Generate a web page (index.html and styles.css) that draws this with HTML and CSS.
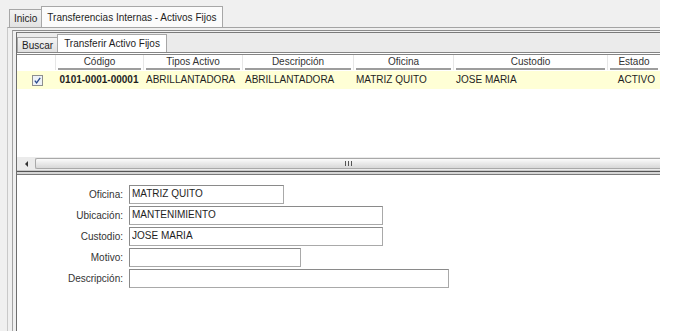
FILE: index.html
```html
<!DOCTYPE html>
<html lang="es">
<head>
    <meta charset="UTF-8">
    <meta name="viewport" content="width=device-width, initial-scale=1.0">
    <title>Transferencias Internas - Activos Fijos</title>
    <link rel="stylesheet" href="styles.css">
</head>
<body>
    <div class="window">
        <div class="tabs">
            <div class="tab">Inicio</div>
            <div class="tab active">Transferencias Internas - Activos Fijos</div>
        </div>

        <div class="outer-panel">
            <div class="inner-panel">
                <div class="inner-body">
                    <div class="subtabs">
                        <div class="subtab">Buscar</div>
                        <div class="subtab active">Transferir Activo Fijos</div>
                    </div>

                    <div class="grid-panel">
                        <div class="grid grid-head">
                            <div class="th blank"></div>
                            <div class="th">Código</div>
                            <div class="th">Tipos Activo</div>
                            <div class="th">Descripción</div>
                            <div class="th">Oficina</div>
                            <div class="th">Custodio</div>
                            <div class="th">Estado</div>
                        </div>
                        <div class="grid grid-row">
                            <div class="td check">
                                <svg width="11" height="11" viewBox="0 0 11 11">
                                    <rect x="0.5" y="0.5" width="10" height="10" fill="#eef2f8" stroke="#8e8f8f"/>
                                    <path d="M2.8 5.6 L4.6 7.9 L8.2 2.8" fill="none" stroke="#2b4c8c" stroke-width="1.3"/>
                                </svg>
                            </div>
                            <div class="td code">0101-0001-00001</div>
                            <div class="td">ABRILLANTADORA</div>
                            <div class="td">ABRILLANTADORA</div>
                            <div class="td">MATRIZ QUITO</div>
                            <div class="td">JOSE MARIA</div>
                            <div class="td right">ACTIVO</div>
                        </div>
                    </div>

                    <div class="hscroll">
                        <div class="arrow"><span class="arrow-left"></span></div>
                        <div class="thumb"><span class="grip"></span></div>
                    </div>
                    <div class="split"></div>

                    <div class="form">
                        <div class="form-row">
                            <label>Oficina:</label>
                            <input type="text" class="w-sm" value="MATRIZ QUITO" readonly>
                        </div>
                        <div class="form-row">
                            <label>Ubicación:</label>
                            <input type="text" class="w-lg" value="MANTENIMIENTO" readonly>
                        </div>
                        <div class="form-row">
                            <label>Custodio:</label>
                            <input type="text" class="w-lg" value="JOSE MARIA" readonly>
                        </div>
                        <div class="form-row">
                            <label>Motivo:</label>
                            <input type="text" class="w-md">
                        </div>
                        <div class="form-row">
                            <label>Descripción:</label>
                            <input type="text" class="w-xl">
                        </div>
                    </div>
                </div>
            </div>
        </div>
    </div>
</body>
</html>
```

FILE: styles.css
```css
body {
    margin: 0;
    background: #fff;
    font-family: "Liberation Sans", Arial, sans-serif;
    font-size: 10px;
    color: #1e1e1e;
}
.window {
    width: 660px;
    height: 331px;
    background: #f0f0f0;
    overflow: hidden;
}

/* top tabs */
.tabs {
    display: flex;
    align-items: flex-end;
    height: 27px;
    padding-left: 9px;
}
.tab {
    height: 17px;
    line-height: 18px;
    padding: 0 4px;
    border: 1px solid #a7a7a7;
    border-bottom: none;
    border-right: none;
    background: linear-gradient(#f3f3f3, #e2e2e2);
}
.tab.active {
    height: 20px;
    line-height: 22px;
    padding: 0 5px;
    border-right: 1px solid #a7a7a7;
    background: #fbfbfb;
}

.outer-panel {
    margin-left: 7px;
    height: 304px;
    border-top: 1px solid #a4a4a4;
    border-left: 1px solid #c9c9c9;
    padding: 2px 0 0 4px;
    box-sizing: border-box;
}
.inner-panel {
    height: 100%;
    border-top: 1px solid #8c8c8c;
    border-left: 1px solid #a3a3a3;
    padding: 1px 0 0 3px;
    box-sizing: border-box;
}
.inner-body {
    height: 100%;
    border-top: 1px solid #7a7a7a;
    border-left: 1px solid #6e6e6e;
    background: #ebebeb;
    box-sizing: border-box;
}

/* inner tabs */
.subtabs {
    display: flex;
    align-items: flex-end;
    height: 19px;
}
.subtab {
    height: 14px;
    line-height: 15px;
    padding: 0 4px;
    border: 1px solid #a7a7a7;
    border-bottom: none;
    border-right: none;
    background: linear-gradient(#f3f3f3, #e0e0e0);
}
.subtab.active {
    height: 17px;
    line-height: 17px;
    padding: 0 6px;
    border-right: 1px solid #a7a7a7;
    background: #fff;
}

/* grid */
.grid-panel {
    height: 102px;
    border-top: 3px double #858585;
    background: #fff;
}
.grid {
    display: grid;
    grid-template-columns: 38px 88px 99px 111px 100px 154px 53px;
}
.grid-head {
    height: 15px;
}
.th {
    line-height: 14px;
    text-align: center;
    color: #333;
    border-left: 1px solid #e6e6e6;
    background: linear-gradient(#9d9d9d, #9d9d9d) no-repeat center bottom / calc(100% - 4px) 2px;
}
.th.blank {
    border-left: none;
    background: none;
}
.grid-row {
    height: 18px;
    margin-top: 1px;
    background: #ffffd6;
}
.td {
    line-height: 18px;
    padding-left: 3px;
    white-space: nowrap;
}
.td.check {
    display: flex;
    align-items: center;
    padding-left: 15px;
}
.td.code {
    padding-left: 0;
    text-align: center;
    font-weight: bold;
}
.td.right {
    padding: 0 5px 0 0;
    text-align: right;
}

/* horizontal scrollbar */
.hscroll {
    display: flex;
    align-items: center;
    height: 13px;
    border-bottom: 1px solid #c8c8c8;
}
.arrow {
    width: 18px;
    display: flex;
    justify-content: center;
}
.arrow-left {
    width: 0;
    height: 0;
    border-top: 3px solid transparent;
    border-bottom: 3px solid transparent;
    border-right: 3px solid #333;
}
.thumb {
    flex: 1;
    height: 9px;
    display: flex;
    align-items: center;
    justify-content: center;
    border: 1px solid #a9a9a9;
    border-right: none;
    border-radius: 2px 0 0 2px;
    background: linear-gradient(#fbfbfb, #e9e9e9 50%, #d8d8d8);
}
.grip {
    width: 7px;
    height: 5px;
    background: linear-gradient(90deg, #555 1px, transparent 1px) 0 0 / 3px 100%;
}
.split {
    height: 2px;
    border-top: 1px solid #555;
    border-bottom: 1px solid #7a7a7a;
    background: #d6d6d6;
}

/* form */
.form {
    height: 160px;
    padding-top: 10px;
    background: #fff;
    box-sizing: border-box;
}
.form-row {
    display: flex;
    align-items: center;
    margin-bottom: 2px;
}
.form-row label {
    width: 112px;
    padding-right: 6px;
    box-sizing: border-box;
    text-align: right;
    color: #333;
}
.form-row input {
    height: 19px;
    margin: 0;
    padding: 0 2px 3px;
    box-sizing: border-box;
    border: 1px solid #8a8a8a;
    border-right-color: #a9a9a9;
    border-bottom-color: #a9a9a9;
    font-family: "Liberation Sans", Arial, sans-serif;
    font-size: 10px;
    color: #1e1e1e;
    background: #fff;
}
.w-sm {
    width: 155px;
}
.w-md {
    width: 172px;
}
.w-lg {
    width: 254px;
}
.w-xl {
    width: 320px;
}
```
